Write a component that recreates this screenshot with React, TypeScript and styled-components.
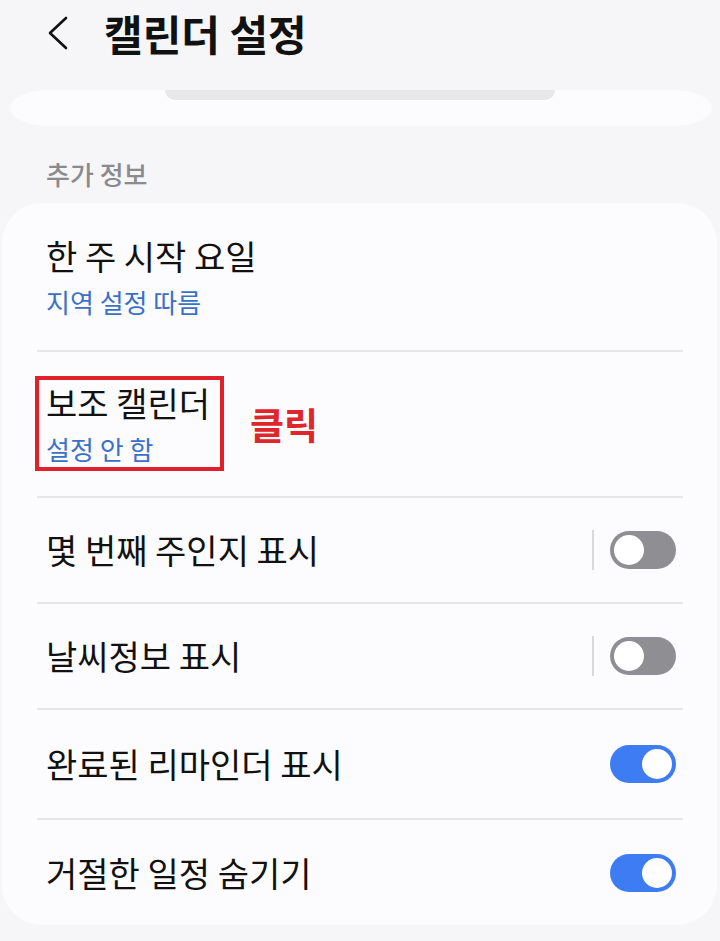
import styled, {createGlobalStyle} from 'styled-components';

const GlobalStyle = createGlobalStyle`
  html, body {
    margin: 0;
    padding: 0;
    background: #f6f6f8;
  }
  body {
    font-family: "Noto Sans CJK KR", "Noto Sans", sans-serif;
    color: #111;
  }
`;

const Screen = styled.div`
  width: 720px;
  height: 941px;
  overflow: hidden;
  background: #f6f6f8;
`;

const Header = styled.div`
  display: flex;
  align-items: center;
  height: 66px;
  padding-left: 46px;
  gap: 34px;
`;

const Title = styled.h1`
  margin: 0;
  font-size: 42px;
  font-weight: 700;
  line-height: 52px;
  color: #111;
`;

const PrevCard = styled.div`
  margin: 24px 8px 0 10px;
  height: 36px;
  background: #fcfcfe;
  border-radius: 40px / 18px;
  display: flex;
  justify-content: center;
`;

const ScrollEdge = styled.div`
  width: 390px;
  height: 10px;
  margin-left: -2px;
  background: #e8e8ea;
  border-radius: 0 0 22px 22px;
`;

const SectionLabel = styled.div`
  margin: 33px 0 14px 46px;
  font-size: 26px;
  line-height: 30px;
  font-weight: 500;
  color: #8b8b8f;
`;

const Card = styled.div`
  margin-left: 2px;
  width: 715px;
  background: #fcfcfe;
  border-radius: 40px;
  overflow: hidden;
`;

const Row = styled.div<{h: number}>`
  display: flex;
  align-items: center;
  height: ${(p) => p.h}px;
  margin: 0 34px 0 35px;
  padding: 0 7px 0 9px;
  box-sizing: border-box;
  & + & {
    border-top: 2px solid #e6e6e8;
  }
`;

const TextBlock = styled.div`
  flex: 1;
  display: flex;
  flex-direction: column;
`;

const ItemTitle = styled.div`
  font-size: 34px;
  line-height: 46px;
  color: #111;
`;

const ItemSub = styled.div`
  margin-top: 5px;
  font-size: 26px;
  line-height: 36px;
  color: #3b70c8;
`;

const Highlight = styled.div`
  display: flex;
  flex-direction: column;
  margin: -3px 0 -2px -11px;
  padding: 0 10px 0 7px;
  border: 4px solid #e0212b;
`;

const ClickNote = styled.span`
  margin-left: 26px;
  font-size: 37px;
  font-weight: 700;
  color: #e0262b;
  line-height: 42px;
  align-self: center;
`;

const Separator = styled.div`
  width: 2px;
  height: 40px;
  background: #d9d9db;
  margin-right: 16px;
`;

const Track = styled.div<{on?: boolean}>`
  position: relative;
  width: 66px;
  height: 38px;
  border-radius: 19px;
  background: ${(p) => (p.on ? '#3d7cf2' : '#8e8e93')};
  flex-shrink: 0;
`;

const Knob = styled.div<{on?: boolean}>`
  position: absolute;
  top: 4px;
  ${(p) => (p.on ? 'right: 4px;' : 'left: 4px;')}
  width: 30px;
  height: 30px;
  border-radius: 50%;
  background: #fff;
`;

const Toggle = ({on}: {on?: boolean}) => (
  <Track on={on}>
    <Knob on={on} />
  </Track>
);

const BackIcon = () => (
  <svg width="24" height="34" viewBox="0 0 24 34" fill="none">
    <polyline points="20,2 4,17 20,32" stroke="#111" strokeWidth="2.6" strokeLinecap="round" strokeLinejoin="round" />
  </svg>
);

export default function App() {
  return (
    <Screen>
      <GlobalStyle />
      <Header>
        <BackIcon />
        <Title>캘린더 설정</Title>
      </Header>
      <PrevCard>
        <ScrollEdge />
      </PrevCard>
      <SectionLabel>추가 정보</SectionLabel>
      <Card>
        <Row h={147}>
          <TextBlock>
            <ItemTitle>한 주 시작 요일</ItemTitle>
            <ItemSub>지역 설정 따름</ItemSub>
          </TextBlock>
        </Row>
        <Row h={146}>
          <Highlight>
            <ItemTitle>보조 캘린더</ItemTitle>
            <ItemSub>설정 안 함</ItemSub>
          </Highlight>
          <ClickNote>클릭</ClickNote>
        </Row>
        <Row h={106}>
          <TextBlock>
            <ItemTitle>몇 번째 주인지 표시</ItemTitle>
          </TextBlock>
          <Separator />
          <Toggle />
        </Row>
        <Row h={106}>
          <TextBlock>
            <ItemTitle>날씨정보 표시</ItemTitle>
          </TextBlock>
          <Separator />
          <Toggle />
        </Row>
        <Row h={110}>
          <TextBlock>
            <ItemTitle>완료된 리마인더 표시</ItemTitle>
          </TextBlock>
          <Toggle on />
        </Row>
        <Row h={107}>
          <TextBlock>
            <ItemTitle>거절한 일정 숨기기</ItemTitle>
          </TextBlock>
          <Toggle on />
        </Row>
      </Card>
    </Screen>
  );
}
